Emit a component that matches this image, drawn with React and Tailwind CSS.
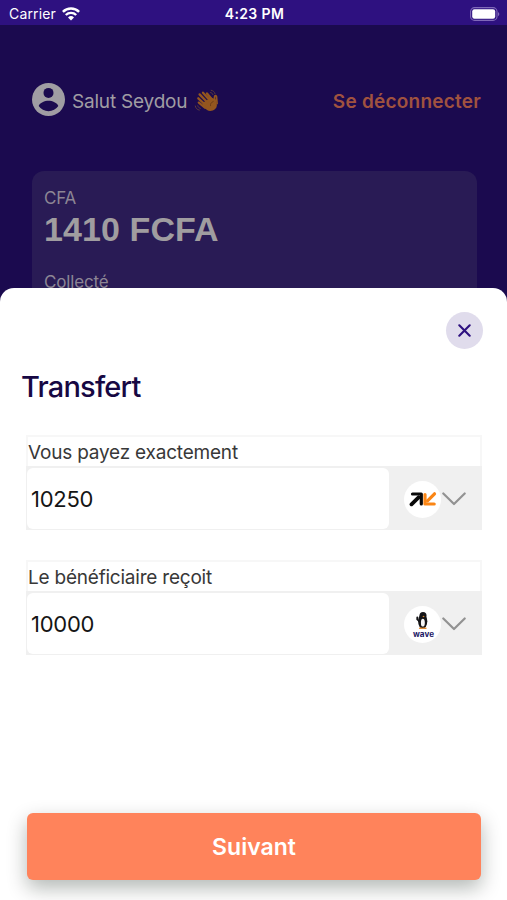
import React from "react";

const fields = [
  {
    id: "send",
    label: "Vous payez exactement",
    value: "10250",
    logo: "orange",
    labelClass: "tracking-[-0.2px]",
  },
  {
    id: "receive",
    label: "Le bénéficiaire reçoit",
    value: "10000",
    logo: "wave",
    labelClass: "tracking-[-0.22px]",
  },
];

const WifiIcon = () => (
  <svg width="18" height="14" viewBox="0 0 18 14" fill="none">
    <path d="M.9 4.9a11.6 11.6 0 0 1 16.2 0" stroke="white" strokeWidth="2.5" />
    <path d="M3.8 8a7.5 7.5 0 0 1 10.4 0" stroke="white" strokeWidth="2.4" />
    <path d="M9 13.6 6 10.5a4.4 4.4 0 0 1 6 0z" fill="white" />
  </svg>
);

const BatteryIcon = () => (
  <svg width="31" height="14" viewBox="0 0 31 14" fill="none">
    <rect x="1.6" y="0.6" width="26.4" height="12.8" rx="4" stroke="#8069b8" strokeWidth="1.1" />
    <rect x="3.2" y="2.2" width="23" height="9.6" rx="2.2" fill="white" />
    <path d="M29 5v4.2c1.8-.8 1.8-3.4 0-4.2z" fill="#8069b8" />
  </svg>
);

const AccountIcon = () => (
  <svg width="33" height="33" viewBox="0 0 33 33">
    <circle cx="16.5" cy="16.5" r="16.5" fill="#a09da3" />
    <circle cx="16.5" cy="9.9" r="5" fill="#1b0a4f" />
    <path d="M6.7 23c1-3.2 6-5.2 9.8-5.2s8.8 2 9.8 5.2a11.9 11.9 0 0 1-19.6 0z" fill="#1b0a4f" />
  </svg>
);

const WaveHand = () => (
  <svg width="25" height="25" viewBox="0 0 25 25" fill="none" strokeLinecap="round">
    <path d="M8.5 15 17 9.5l5 2 .9 5.300c.2 5-6 7.700-9.900 5.300l-4.200-3.500z" fill="#94561f" />
    <path d="M11 16.500 4.300 10.300M13 14 5.600 6.400M15.500 12 9 4.700M18 11.500 13 5.400M11 19.700 4.800 14.600" stroke="#94561f" strokeWidth="2.300" />
    <path d="M20.500 13.500V9.300c0-2 1.700-2.200 2-.6l.6 6.800" stroke="#94561f" strokeWidth="1.700" />
    <path d="M19.200 13.500c-2 .8-3 2.200-2.700 4.200" stroke="#633615" strokeWidth="0.800" />
    <path d="M17.200 2.300c2 .3 3.300 1.600 3.800 3.400M16.600 4.500c1.200.3 2 1 2.300 2.100M1.300 18c.4 2.300 1.800 3.700 4 4.100M3.800 17.800c.4 1.400 1.200 2.200 2.500 2.500" stroke="#5b3a3c" strokeWidth="1" />
  </svg>
);

const OrangeLogo = () => (
  <svg width="28" height="16" viewBox="0 0 28 16" fill="none">
    <path d="M2.5 13.3 9.6 6.300" stroke="#080808" strokeWidth="3.800" strokeLinecap="round" />
    <path d="M3.500 3h8.800v9.900" stroke="#080808" strokeWidth="3.200" strokeLinecap="round" strokeLinejoin="round" />
    <path d="M25.500 2.800 18.500 9.800" stroke="#fa8514" strokeWidth="3.200" strokeLinecap="round" />
    <path d="M16 3.600V13h9.200" stroke="#fa8514" strokeWidth="3.200" strokeLinecap="round" strokeLinejoin="round" />
  </svg>
);

const WaveLogo = () => (
  <svg width="36" height="36" viewBox="0 0 36 36">
    <ellipse cx="17.700" cy="15.200" rx="4.600" ry="7.400" fill="#151518" />
    <circle cx="18" cy="9.600" r="3.500" fill="#151518" />
    <path d="M14.500 15.300 12.300 13.400v-1.900" stroke="#151518" strokeWidth="1.900" fill="none" strokeLinecap="round" />
    <path d="M17.800 12.800c2 0 2.300 3.500 1.800 6.200-.7 2.100-3 2.100-3.500 0-.4-2.700-.2-6.200 1.700-6.200z" fill="#f7f7f7" />
    <path d="m17.300 10.300 1.500-.6.8.8-1 .8z" fill="#df8a32" />
    <path d="M14.700 22.300h2.400M18.500 22.300h2.400" stroke="#df8a32" strokeWidth="1.600" strokeLinecap="round" />
    <text x="18.500" y="30.600" textAnchor="middle" textLength="21" lengthAdjust="spacingAndGlyphs" fill="#1c1765" fontSize="7.500" fontWeight="700" fontFamily="Inter, sans-serif">
      wave
    </text>
  </svg>
);

const ChevronIcon = () => (
  <svg width="24" height="14" viewBox="0 0 24 14" fill="none">
    <path d="m1.300 1.500 10.700 10.500L22.700 1.500" stroke="#929292" strokeWidth="2.200" strokeLinecap="round" strokeLinejoin="round" />
  </svg>
);

const AmountField = ({ label, value, logo, labelClass }) => (
  <div className="h-[95px] w-[456px] bg-[#f0f0f0]">
    <div className="flex h-[31px] items-center border-2 border-b-0 border-[#f7f7f7] bg-white">
      <span className={`whitespace-nowrap pt-0.5 text-[19px] leading-6 text-[#383838] ${labelClass}`}>
        {label}
      </span>
    </div>
    <div className="flex h-16 border border-[#f0f0f0]">
      <div className="mt-px flex w-[362px] items-center rounded-md bg-white pl-1">
        <span className="text-[22px] leading-7 tracking-[-0.25px] text-[#151515]">{value}</span>
      </div>
      <div className="flex flex-1 items-center pt-0.5 pl-[15px]">
        <div className="flex size-[37px] items-center justify-center rounded-full bg-white">
          {logo === "orange" ? <OrangeLogo /> : <WaveLogo />}
        </div>
        <div className="ml-px">
          <ChevronIcon />
        </div>
      </div>
    </div>
  </div>
);

const App = () => {
  return (
    <div className="flex h-[900px] w-[507px] flex-col overflow-hidden bg-[#1b0a4f] font-['Inter',sans-serif]">
      {/* Status bar */}
      <div className="grid h-[25px] shrink-0 grid-cols-3 items-center bg-[#2e1180] pt-0.5 pr-[7px] pl-[9px] text-white">
        <div className="flex items-center gap-1.5">
          <span className="text-sm leading-5 tracking-[0.15px]">Carrier</span>
          <WifiIcon />
        </div>
        <span className="text-center text-sm leading-5 font-semibold tracking-[0.35px]">4:23 PM</span>
        <div className="flex justify-end">
          <BatteryIcon />
        </div>
      </div>

      {/* Account header */}
      <div className="flex h-[263px] shrink-0 flex-col px-8 pt-[58px]">
        <div className="-mr-1.5 flex h-[33px] items-center">
          <AccountIcon />
          <span className="ml-[7px] pt-1 text-[19px] leading-6 tracking-[-0.2px] whitespace-nowrap text-[#a09da3]">
            Salut Seydou
          </span>
          <div className="ml-[7px] pt-0.5">
            <WaveHand />
          </div>
          <span className="ml-auto pt-1 text-[19px] leading-6 font-semibold tracking-[0.23px] whitespace-nowrap text-[#a0523f]">
            Se déconnecter
          </span>
        </div>

        <div className="mt-[55px] h-[117px] w-[445px] shrink-0 rounded-t-xl bg-[#291b55] px-3 pt-[17px] text-[#8c8594]">
          <p className="text-[17px] leading-5 tracking-[-0.15px]">CFA</p>
          <p className="mt-px font-['Liberation_Sans',sans-serif] text-[34px] leading-10 font-bold tracking-[0.1px] text-[#a09da0]">
            1410 FCFA
          </p>
          <p className="mt-[23px] text-[17px] leading-5 tracking-[-0.15px]">Collecté</p>
        </div>
      </div>

      {/* Transfer sheet */}
      <div className="z-10 flex flex-1 flex-col rounded-t-[14px] bg-white pt-6">
        <button className="mr-6 flex size-[37px] items-center justify-center self-end rounded-full bg-[#e0dcec]">
          <svg width="13" height="13" viewBox="0 0 13 13">
            <path d="m1.300 1.300 10.400 10.400M11.700 1.300 1.300 11.700" stroke="#2e1180" strokeWidth="2.100" strokeLinecap="round" />
          </svg>
        </button>
        <h1 className="mt-5 ml-[21px] text-[29px] leading-9 font-medium tracking-[-0.8px] text-[#170843]">
          Transfert
        </h1>

        <div className="mt-[30px] ml-[26px] flex flex-col gap-[30px]">
          {fields.map((field) => (
            <AmountField key={field.id} {...field} />
          ))}
        </div>

        <button className="mt-auto mb-5 ml-[27px] h-[67px] w-[454px] rounded-md bg-[#ff835b] pt-0.5 text-[23px] font-semibold text-white shadow-[0_8px_20px_rgba(0,20,10,0.3)]">
          Suivant
        </button>
      </div>
    </div>
  );
};

export default App;
